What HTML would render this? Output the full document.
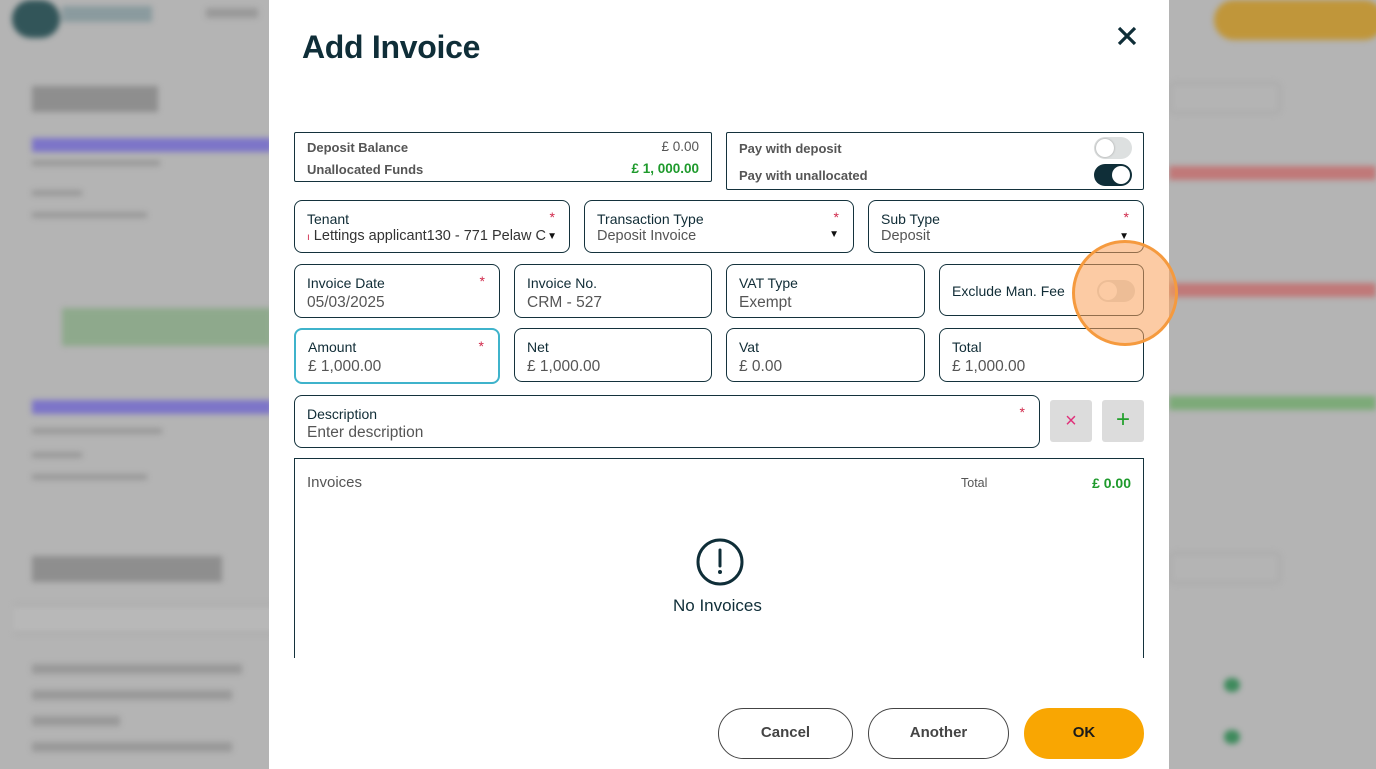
<!DOCTYPE html>
<html><head><meta charset="utf-8"><style>
*{box-sizing:border-box;margin:0;padding:0}
body{width:1376px;height:769px;overflow:hidden;background:#b4b4b4;font-family:"Liberation Sans",sans-serif;position:relative;color:#0f2e38}
.bg{position:absolute;inset:0;filter:blur(3px)}
.a{position:absolute}
.m{position:absolute;left:269px;top:0;width:900px;height:769px;background:#fff}
.b{position:absolute;border:1px solid #14323c;border-radius:8px;background:#fff}
.lb{position:absolute;left:12px;top:10px;font-size:14px;color:#102c36}
.vl{position:absolute;left:12px;top:29px;font-size:15.5px;color:#555}
.st{position:absolute;right:14px;top:8px;color:#d0284a;font-size:14px}
.ar{position:absolute;right:14px;top:28px;font-size:10px;color:#111}
.btn{position:absolute;top:708px;height:51px;border-radius:26px;border:1.5px solid #444;background:#fff;font-size:15px;font-weight:bold;color:#444;text-align:center;line-height:48px}
.tg{position:absolute;width:38px;height:22px;border-radius:11px}
.tg i{position:absolute;top:2px;width:18px;height:18px;border-radius:50%;background:#fff}
</style></head><body>
<div class="bg">
<div class="a" style="left:12px;top:0;width:48px;height:38px;border-radius:24px;background:#325559"></div>
<div class="a" style="left:62px;top:6px;width:90px;height:16px;background:#8a9a9e"></div>
<div class="a" style="left:206px;top:8px;width:52px;height:10px;background:#999"></div>
<div class="a" style="left:32px;top:86px;width:126px;height:26px;background:#8e8e8e"></div>
<div class="a" style="left:32px;top:138px;width:240px;height:14px;background:#7c74c8"></div>
<div class="a" style="left:32px;top:160px;width:128px;height:6px;background:#999"></div>
<div class="a" style="left:32px;top:190px;width:50px;height:6px;background:#999"></div>
<div class="a" style="left:32px;top:212px;width:115px;height:6px;background:#999"></div>
<div class="a" style="left:62px;top:308px;width:210px;height:38px;background:#8ea98c"></div>
<div class="a" style="left:32px;top:400px;width:240px;height:14px;background:#7c74c8"></div>
<div class="a" style="left:32px;top:428px;width:130px;height:6px;background:#999"></div>
<div class="a" style="left:32px;top:452px;width:50px;height:6px;background:#999"></div>
<div class="a" style="left:32px;top:474px;width:115px;height:6px;background:#999"></div>
<div class="a" style="left:32px;top:556px;width:190px;height:26px;background:#8e8e8e"></div>
<div class="a" style="left:14px;top:604px;width:260px;height:30px;background:#b8b8b8;border-top:2px solid #a6a6a6;border-bottom:2px solid #a6a6a6"></div>
<div class="a" style="left:32px;top:664px;width:210px;height:10px;background:#999"></div>
<div class="a" style="left:32px;top:690px;width:200px;height:10px;background:#999"></div>
<div class="a" style="left:32px;top:716px;width:88px;height:10px;background:#999"></div>
<div class="a" style="left:32px;top:742px;width:200px;height:10px;background:#999"></div>
<div class="a" style="left:1214px;top:0;width:170px;height:40px;border-radius:20px;background:#c0963a"></div>
<div class="a" style="left:1169px;top:82px;width:112px;height:32px;border:2px solid #a8a8a8;border-radius:6px"></div>
<div class="a" style="left:1169px;top:166px;width:207px;height:14px;background:#c07878"></div>
<div class="a" style="left:1169px;top:283px;width:207px;height:14px;background:#c07878"></div>
<div class="a" style="left:1169px;top:396px;width:207px;height:14px;background:#7caa78"></div>
<div class="a" style="left:1169px;top:552px;width:112px;height:32px;border:2px solid #a8a8a8;border-radius:6px"></div>
<div class="a" style="left:1224px;top:678px;width:16px;height:14px;border-radius:8px;background:#3e8a5c"></div>
<div class="a" style="left:1224px;top:730px;width:16px;height:14px;border-radius:8px;background:#3e8a5c"></div>
</div>
<div class="m"></div>
<div class="a" style="left:302px;top:29px;font-size:32px;font-weight:bold;color:#0f2e38;letter-spacing:-0.3px">Add Invoice</div>
<svg class="a" style="left:1117px;top:26px" width="20" height="20"><path d="M2 2L18 18M18 2L2 18" stroke="#0f2e38" stroke-width="3.2"/></svg>

<div class="b" style="left:294px;top:132px;width:418px;height:50px;border-radius:2px">
<div class="a" style="left:12px;top:7px;font-size:13px;font-weight:bold;color:#555">Deposit Balance</div>
<div class="a" style="right:12px;top:6px;font-size:13.5px;color:#555">£ 0.00</div>
<div class="a" style="left:12px;top:29px;font-size:13px;font-weight:bold;color:#555">Unallocated Funds</div>
<div class="a" style="right:12px;top:28px;font-size:13.5px;font-weight:bold;color:#1e9a2c">£ 1, 000.00</div>
</div>
<div class="b" style="left:726px;top:132px;width:418px;height:58px;border-radius:2px">
<div class="a" style="left:12px;top:8px;font-size:13px;font-weight:bold;color:#555">Pay with deposit</div>
<div class="a" style="left:12px;top:35px;font-size:13px;font-weight:bold;color:#555">Pay with unallocated</div>
<div class="tg" style="left:367px;top:4px;background:#dde0e0"><i style="left:2px;box-shadow:0 0 2px #999"></i></div>
<div class="tg" style="left:367px;top:31px;background:#0f2e38"><i style="left:18px"></i></div>
</div>

<div class="b" style="left:294px;top:200px;width:276px;height:53px"><div class="lb">Tenant</div><div class="st">*</div><div class="vl" style="top:27px;font-size:14.5px;color:#333;white-space:nowrap;overflow:hidden;width:240px"><span style="color:#d0284a;font-size:10px">ı</span> Lettings applicant130 - 771 Pelaw Cres</div><div class="ar" style="right:12px;top:30px">▼</div></div>
<div class="b" style="left:584px;top:200px;width:270px;height:53px"><div class="lb">Transaction Type</div><div class="st">*</div><div class="vl" style="top:27px;font-size:14.5px">Deposit Invoice</div><div class="ar">▼</div></div>
<div class="b" style="left:868px;top:200px;width:276px;height:53px"><div class="lb">Sub Type</div><div class="st">*</div><div class="vl" style="top:27px;font-size:14.5px">Deposit</div><div class="ar" style="top:30px">▼</div></div>

<div class="b" style="left:294px;top:264px;width:206px;height:54px"><div class="lb">Invoice Date</div><div class="st">*</div><div class="vl">05/03/2025</div></div>
<div class="b" style="left:514px;top:264px;width:198px;height:54px"><div class="lb">Invoice No.</div><div class="vl">CRM - 527</div></div>
<div class="b" style="left:726px;top:264px;width:199px;height:54px"><div class="lb">VAT Type</div><div class="vl">Exempt</div></div>
<div class="b" style="left:939px;top:264px;width:205px;height:52px"><div class="lb" style="top:18px">Exclude Man. Fee</div><div class="tg" style="left:157px;top:15px;background:#dde0e0"><i style="left:2px"></i></div></div>

<div class="b" style="left:294px;top:328px;width:206px;height:56px;border:2px solid #3fb3cb"><div class="lb" style="top:9px">Amount</div><div class="st">*</div><div class="vl" style="top:28px">£ 1,000.00</div></div>
<div class="b" style="left:514px;top:328px;width:198px;height:54px"><div class="lb">Net</div><div class="vl">£ 1,000.00</div></div>
<div class="b" style="left:726px;top:328px;width:199px;height:54px"><div class="lb">Vat</div><div class="vl">£ 0.00</div></div>
<div class="b" style="left:939px;top:328px;width:205px;height:54px"><div class="lb">Total</div><div class="vl">£ 1,000.00</div></div>

<div class="b" style="left:294px;top:395px;width:746px;height:53px"><div class="lb">Description</div><div class="st">*</div><div class="vl" style="top:28px">Enter description</div></div>
<div class="a" style="left:1050px;top:400px;width:42px;height:42px;background:#dcdcdc;border-radius:3px;color:#e0307a;font-size:20px;text-align:center;line-height:42px">×</div>
<div class="a" style="left:1102px;top:400px;width:42px;height:42px;background:#dcdcdc;border-radius:3px;color:#22a02c;font-size:24px;text-align:center;line-height:40px">+</div>

<div class="a" style="left:294px;top:458px;width:850px;height:200px;border:1px solid #14323c;border-bottom:none">
<div class="a" style="left:12px;top:15px;font-size:15px;color:#555">Invoices</div>
<div class="a" style="left:666px;top:17px;font-size:12.5px;color:#555">Total</div>
<div class="a" style="right:12px;top:16px;font-size:14px;font-weight:bold;color:#1e9a2c">£ 0.00</div>
<svg class="a" style="left:400px;top:78px" width="50" height="50"><circle cx="25" cy="25" r="22" fill="none" stroke="#0f2e38" stroke-width="3"/><path d="M25 13V29" stroke="#0f2e38" stroke-width="3" stroke-linecap="round"/><circle cx="25" cy="35" r="2" fill="#0f2e38"/></svg>
<div class="a" style="left:378px;top:137px;font-size:17px;color:#0f2e38">No Invoices</div>
</div>

<div class="btn" style="left:718px;width:135px">Cancel</div>
<div class="btn" style="left:868px;width:141px">Another</div>
<div class="btn" style="left:1024px;width:120px;background:#f9a602;border-color:#f9a602;color:#1a1a1a">OK</div>

<div class="a" style="left:1072px;top:240px;width:106px;height:106px;border-radius:50%;background:rgba(250,160,90,0.55);border:3px solid #f59a3e"></div>
</body></html>
